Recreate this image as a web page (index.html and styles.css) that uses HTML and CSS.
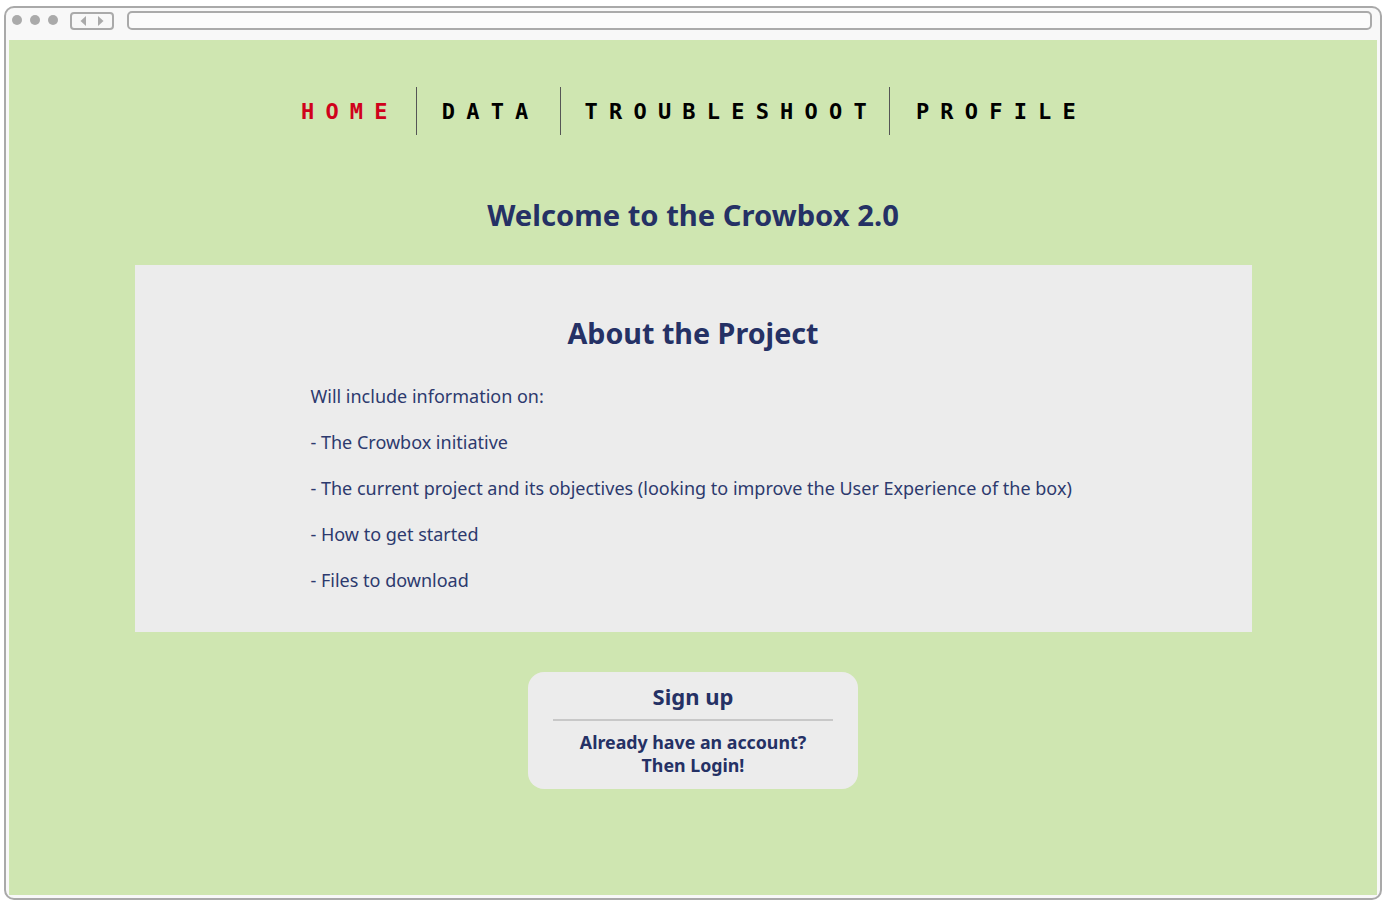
FILE: index.html
```html
<!DOCTYPE html>
<html lang="en">
<head>
<meta charset="utf-8">
<title>Crowbox 2.0</title>
<link rel="stylesheet" href="styles.css">
</head>
<body>
<div class="window">
  <div class="chrome">
    <div class="dots"><span class="dot"></span><span class="dot"></span><span class="dot"></span></div>
    <div class="navbtns">
      <svg width="40" height="14" viewBox="0 0 40 14"><polygon points="14,2 8.5,7 14,12" fill="#aaaaaa"/><polygon points="26,2 31.5,7 26,12" fill="#aaaaaa"/></svg>
    </div>
    <div class="address"></div>
  </div>
  <div class="page">
    <nav class="topnav">
      <a class="item item-home active">HOME</a>
      <span class="sep"></span>
      <a class="item item-data">DATA</a>
      <span class="sep"></span>
      <a class="item item-trouble">TROUBLESHOOT</a>
      <span class="sep"></span>
      <a class="item item-profile">PROFILE</a>
    </nav>
    <h1 class="welcome">Welcome to the Crowbox 2.0</h1>
    <section class="about">
      <h2>About the Project</h2>
      <div class="about-text">
        <p>Will include information on:</p>
        <p>- The Crowbox initiative</p>
        <p>- The current project and its objectives (looking to improve the User Experience of the box)</p>
        <p>- How to get started</p>
        <p>- Files to download</p>
      </div>
    </section>
    <div class="auth">
      <div class="signup">Sign up</div>
      <div class="divider"></div>
      <div class="login">Already have an account?<br>Then Login!</div>
    </div>
  </div>
</div>
</body>
</html>
```
FILE: styles.css
```css
* { box-sizing: border-box; }
html, body { margin: 0; padding: 0; background: #ffffff; }
body { width: 1388px; height: 908px; overflow: hidden; }

.window {
  margin: 6px 0 0 4px;
  width: 1378px;
  height: 894px;
  border: 2px solid #a9a9a9;
  border-radius: 10px;
  background: #f8f8f8;
  padding: 0 3px 3px 3px;
  display: flex;
  flex-direction: column;
}

.chrome {
  height: 32px;
  flex: none;
  display: flex;
  align-items: flex-start;
  padding-top: 1px;
}
.dots { display: flex; gap: 8px; padding: 6px 0 0 3px; }
.dot { width: 10px; height: 10px; border-radius: 50%; background: #aaaaaa; }
.navbtns {
  margin-left: 12px;
  margin-top: 3px;
  width: 44px; height: 18px;
  border: 2px solid #aaaaaa;
  border-radius: 4px;
  display: flex; align-items: center; justify-content: center;
}
.navbtns svg { display: block; }
.address {
  margin-left: 13px;
  margin-top: 2px;
  width: 1245px; height: 19px;
  border: 2px solid #aaaaaa;
  border-radius: 5px;
  background: #fbfbfb;
}

.page {
  flex: 1;
  background: #cfe6b1;
  display: flex;
  flex-direction: column;
  align-items: center;
  font-family: "Noto Sans", "Open Sans", sans-serif;
  color: #253165;
}

.topnav {
  display: flex;
  align-items: center;
  margin-top: 47px;
  margin-left: 2px;
  height: 48px;
}
.item {
  font-family: "DejaVu Sans Mono", "Liberation Mono", monospace;
  font-weight: bold;
  font-size: 22px;
  letter-spacing: 11.2px;
  color: #000000;
  text-decoration: none;
}
.item-home { padding: 0 17px 0 0; }
.item-data { padding: 0 20px 0 25px; }
.item-trouble { padding: 0 11px 0 24px; }
.item-profile { padding: 0 0 0 26px; }
.item.active { color: #d0021b; }
.sep { width: 1px; height: 48px; background: #555555; }

.welcome {
  margin: 61px 0 0 0;
  font-size: 29.2px;
  font-weight: bold;
  line-height: 38px;
  color: #253165;
}

.about {
  margin-top: 31px;
  width: 1117px;
  height: 367px;
  background: #ececec;
  padding: 48px 0 0 176px;
}
.about h2 {
  margin: 0 0 0 -176px;
  text-align: center;
  font-size: 28.7px;
  line-height: 40px;
  font-weight: bold;
}
.about-text { margin-top: 30px; }
.about-text p {
  margin: 0 0 20px 0;
  font-size: 18px;
  line-height: 26px;
  color: #2d3a6e;
}

.auth {
  margin-top: 40px;
  width: 330px;
  height: 117px;
  background: #ececec;
  border-radius: 16px;
  display: flex;
  flex-direction: column;
  align-items: center;
  padding-top: 9px;
}
.signup { font-size: 22px; font-weight: bold; line-height: 30px; }
.divider { width: 280px; height: 2px; background: #c8c8c8; margin: 8px 0 10px 0; }
.login { font-size: 17.8px; font-weight: bold; line-height: 23px; text-align: center; }
```
